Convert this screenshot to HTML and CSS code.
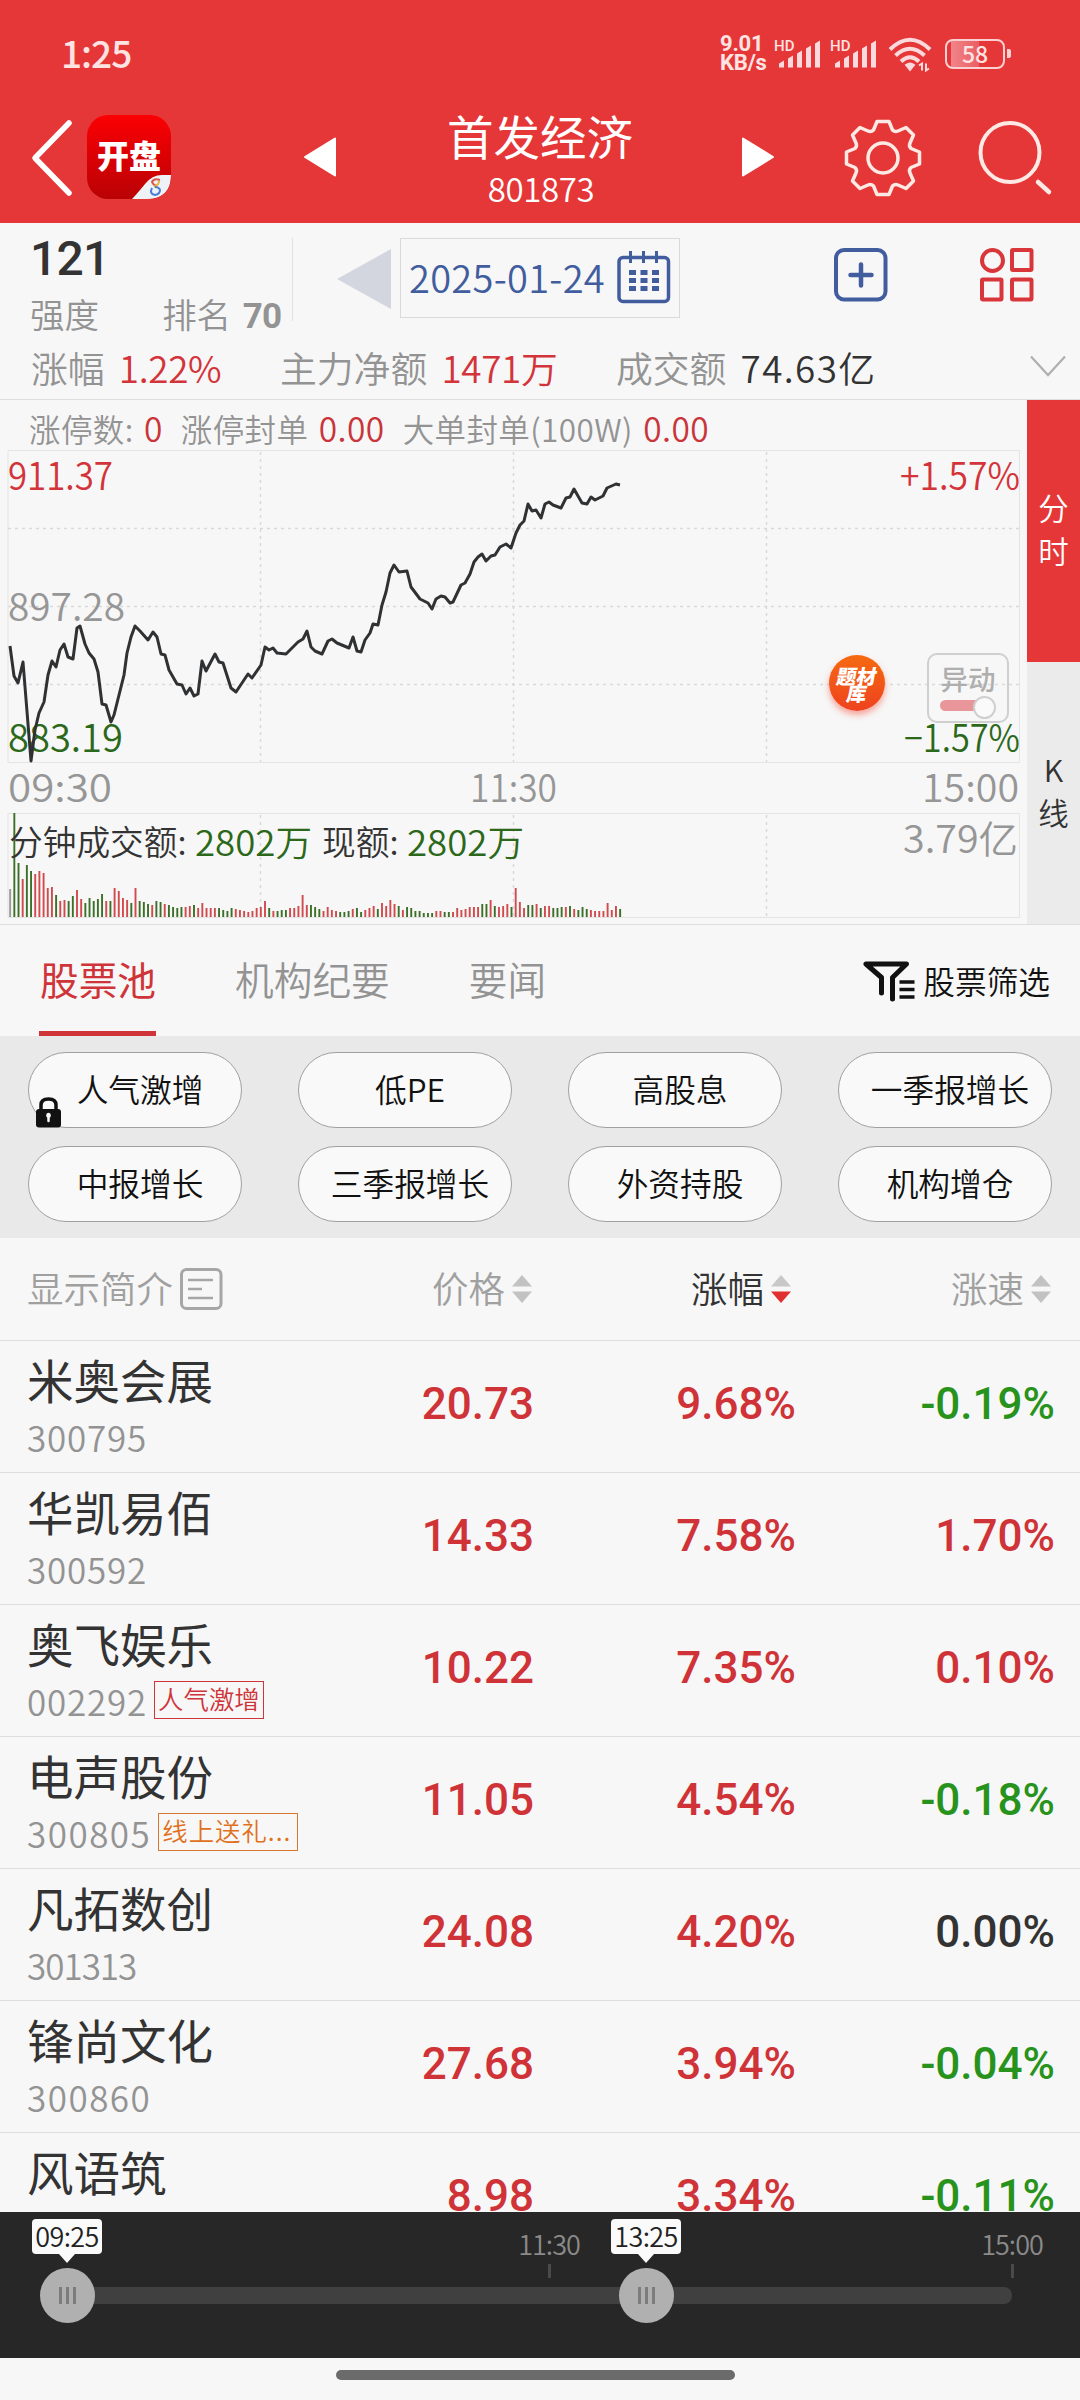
FILE: index.html
```html
<!DOCTYPE html>
<html lang="zh-CN">
<head>
    <meta charset="UTF-8">
    <meta name="viewport" content="width=device-width, initial-scale=1.0">
    <title>首发经济 801873</title>
    <link rel="stylesheet" href="styles.css">
</head>
<body>
    <header class="top">
        <div class="status">
            <span class="clock">1:25</span>
            <span class="speed">9.01<br>KB/s</span>
            <svg class="signal" width="50" height="34" viewBox="0 0 50 34">
                <text class="hd" x="0" y="13">HD</text>
                <path d="M5 29.5v-4l5-3v7zM14 29.5v-9l5-3v12zM23 29.5v-14l5-3v17zM32 29.5v-19l5-3v22zM41 29.5v-24l5-3v27z" fill="#fbd9dc"/>
            </svg>
            <svg class="signal" width="50" height="34" viewBox="0 0 50 34">
                <text class="hd" x="0" y="13">HD</text>
                <path d="M5 29.5v-4l5-3v7zM14 29.5v-9l5-3v12zM23 29.5v-14l5-3v17zM32 29.5v-19l5-3v22zM41 29.5v-24l5-3v27z" fill="#fbd9dc"/>
            </svg>
            <svg class="wifi" width="44" height="36" viewBox="0 0 44 36">
                <g fill="none" stroke="#fbd9dc" stroke-width="4">
                    <path d="M2 13.500Q22 -6 42 13.500"/>
                    <path d="M7.500 19.500Q22 6 36.500 19.500"/>
                    <path d="M13 25.500Q22 17 31 25.500"/>
                </g>
                <path d="M18 29q4-3 8 0l-4 5z" fill="#fbd9dc" stroke="#fbd9dc" stroke-width="2"/>
                <path d="M31 29.500l3-2v7m4-7v7l3-2" stroke="#fbd9dc" stroke-width="2" fill="none"/>
            </svg>
            <div class="battery"><span>58</span></div>
        </div>
        <div class="nav">
            <svg class="back" width="44" height="78" viewBox="0 0 44 78">
                <path d="M39 4L5 39L39 74" fill="none" stroke="#fff" stroke-width="5.500" stroke-linecap="round" stroke-linejoin="round"/>
            </svg>
            <div class="app-icon">
                <span>开盘</span>
                <svg class="fold" width="39" height="24" viewBox="0 0 39 24">
                    <path d="M0 24Q4 20 13 9Q20 0 30 0H39Q39 24 15 24z" fill="#eef1f5"/>
                    <path d="M28 5q-6-2-8 2q1 3 5 4" fill="none" stroke="#d95a4a" stroke-width="2"/>
                    <path d="M27 6q0 4-5 6" fill="none" stroke="#e8b23c" stroke-width="2"/>
                    <path d="M20 13q-3 6 3 7q5-1 5-5q-1-3-5-3" fill="none" stroke="#4a7fd8" stroke-width="2"/>
                </svg>
            </div>
            <svg class="prev" width="34" height="42" viewBox="0 0 34 42"><path d="M2 21L32 2.500V39.500z" fill="#fff" stroke="#fff" stroke-width="2" stroke-linejoin="round"/></svg>
            <div class="title">
                <div class="title-name">首发经济</div>
                <div class="title-code">801873</div>
            </div>
            <svg class="next" width="34" height="42" viewBox="0 0 34 42"><path d="M32 21L2 2.500V39.500z" fill="#fff" stroke="#fff" stroke-width="2" stroke-linejoin="round"/></svg>
            <svg class="gear" width="80" height="80" viewBox="-40 -40 80 80">
                <g fill="none" stroke="#ffe9e4" stroke-width="3.500" stroke-linejoin="round">
                    <path d="M-6 -36.500H6L9.500 -28Q12 -25.500 15 -27L23 -30.500L30.500 -23L27 -15Q25.500 -12 28 -9.500L36.500 -6V6L28 9.500Q25.500 12 27 15L30.500 23L23 30.500L15 27Q12 25.500 9.500 28L6 36.500H-6L-9.500 28Q-12 25.500 -15 27L-23 30.500L-30.500 23L-27 15Q-25.500 12 -28 9.500L-36.500 6V-6L-28 -9.500Q-25.500 -12 -27 -15L-30.500 -23L-23 -30.500L-15 -27Q-12 -25.500 -9.500 -28z"/>
                    <circle r="15"/>
                </g>
            </svg>
            <svg class="search" width="76" height="80" viewBox="0 0 76 80">
                <circle cx="33" cy="33.500" r="29.500" fill="none" stroke="#ffe9e4" stroke-width="4"/>
                <path d="M61 63L72 73" stroke="#ffe9e4" stroke-width="4.500" stroke-linecap="round"/>
            </svg>
        </div>
    </header>

    <section class="summary">
        <div class="summary-top">
            <div class="strength">
                <div class="strength-num">121</div>
                <div class="strength-row"><span>强度</span><span>排名 <b>70</b></span></div>
            </div>
            <svg class="day-prev" width="54" height="60" viewBox="0 0 54 60"><path d="M0 30L54 0V60z" fill="#d3d5df"/></svg>
            <div class="date-box">
                <span>2025-01-24</span>
                <svg width="54" height="54" viewBox="0 0 54 54">
                    <rect x="2" y="7.500" width="49.500" height="44" rx="4" fill="none" stroke="#415d9e" stroke-width="3.500"/>
                    <path d="M13.500 1v12M26.500 1v12M39.500 1v12" stroke="#415d9e" stroke-width="3"/>
                    <path d="M12 22.500h30M12 30.500h30M12 38.500h30" stroke="#415d9e" stroke-width="5" stroke-dasharray="7 4.500"/>
                </svg>
            </div>
            <svg class="add" width="54" height="54" viewBox="0 0 54 54">
                <rect x="2" y="2" width="49.500" height="49.500" rx="8" fill="none" stroke="#415d9e" stroke-width="4"/>
                <path d="M27 16.500v21M16.500 27h21" stroke="#415d9e" stroke-width="4.500" stroke-linecap="round"/>
            </svg>
            <svg class="modules" width="54" height="54" viewBox="0 0 54 54">
                <g fill="none" stroke="#d9363b" stroke-width="4">
                    <circle cx="12.500" cy="12.500" r="10.500"/>
                    <rect x="32" y="2" width="19.500" height="20" rx="1"/>
                    <rect x="2" y="31.500" width="19.500" height="20" rx="1"/>
                    <rect x="32" y="31.500" width="19.500" height="20" rx="1"/>
                </g>
            </svg>
        </div>
        <div class="summary-row">
            <span class="kv kv-rise">涨幅 <em class="red">1.22%</em></span>
            <span class="kv kv-main">主力净额 <em class="red">1471万</em></span>
            <span class="kv kv-amount">成交额 <em>74.63亿</em></span>
            <svg width="36" height="24" viewBox="0 0 36 24"><path d="M1 1.500L18 20L35 1.500" fill="none" stroke="#b0b0b0" stroke-width="2.200"/></svg>
        </div>
    </section>

    <section class="chart-section">
        <div class="chart-main">
            <div class="limits">
                <span>涨停数: <em>0</em></span>
                <span>涨停封单 <em>0.00</em></span>
                <span>大单封单(100W) <em>0.00</em></span>
            </div>
            <svg class="chart" width="1027" height="475" viewBox="0 450 1027 475">
                <g class="grid">
                    <path d="M8 450.500H1019.500V762.500H8zM8 813.500H1019.500V917.500H8z"/>
                    <path class="dash" d="M8 528.500H1019M8 606.500H1019M8 684.500H1019M260.500 452V762M513.500 452V762M766.500 452V762M260.500 815V917M513.500 815V917M766.500 815V917"/>
                </g>
                <text class="axis red" x="8" y="490" textLength="105" lengthAdjust="spacingAndGlyphs">911.37</text>
                <text class="axis grey" x="8" y="621" textLength="117" lengthAdjust="spacingAndGlyphs">897.28</text>
                <text class="axis red" x="900" y="490" textLength="120" lengthAdjust="spacingAndGlyphs">+1.57%</text>
                <g id="volume"></g>
                <text class="axis green" x="8" y="752" textLength="115" lengthAdjust="spacingAndGlyphs">883.19</text>
                <text class="axis green" x="904" y="752" textLength="116" lengthAdjust="spacingAndGlyphs">−1.57%</text>
                <text class="axis grey" x="8" y="802" textLength="104" lengthAdjust="spacingAndGlyphs">09:30</text>
                <text class="axis grey" x="470" y="802" textLength="87" lengthAdjust="spacingAndGlyphs">11:30</text>
                <text class="axis grey" x="922" y="802" textLength="97" lengthAdjust="spacingAndGlyphs">15:00</text>
                <text class="axis grey" x="903" y="853" textLength="115" lengthAdjust="spacingAndGlyphs">3.79亿</text>
                <text class="minute" x="9" y="855">分钟成交额:</text>
                <text class="minute green" x="195" y="856" textLength="117" lengthAdjust="spacingAndGlyphs">2802万</text>
                <text class="minute" x="322" y="855">现额:</text>
                <text class="minute green" x="407" y="856" textLength="117" lengthAdjust="spacingAndGlyphs">2802万</text>
                <polyline class="price-line" points="10,646 14,676 18,683 23,662 31,761 35,730 39,713 44,702 48,675 52,661 56,667 60,650 64,644 68,657 73,659 77,628 80,626 85,644 89,653 94,659 98,672 102,704 106,705 111,722 114,715 119,695 124,675 127,653 131,637 135,626 140,631 148,640 153,632 157,637 161,654 165,655 169,670 177,684 182,685 186,694 190,688 194,696 198,694 202,661 206,671 215,654 219,662 223,663 231,688 236,692 248,674 252,678 261,665 265,647 269,650 273,648 277,653 286,654 298,642 303,639 307,631 311,647 315,651 322,654 328,641 332,639 337,643 349,648 353,637 357,651 361,652 365,640 370,633 373,624 378,625 382,605 386,592 390,573 394,565 399,572 407,571 411,587 420,599 428,603 432,609 436,599 441,596 445,597 450,603 453,602 461,585 465,583 470,574 474,562 478,557 482,554 486,561 491,556 495,555 500,547 506,544 511,548 516,533 520,525 524,521 528,504 532,511 536,510 541,518 545,504 549,502 553,505 561,508 566,498 570,497 574,489 582,503 587,504 591,497 595,500 603,496 607,488 616,484 620,485"/>
            </svg>
            <div class="topic-badge"><span>题材</span><span>库</span></div>
            <div class="alert-toggle"><span>异动</span><i></i></div>
        </div>
        <div class="side-tabs">
            <div class="side-tab active">分<br>时</div>
            <div class="side-tab">K<br>线</div>
        </div>
    </section>

    <nav class="tabs">
        <span class="tab active">股票池</span>
        <span class="tab">机构纪要</span>
        <span class="tab">要闻</span>
        <span class="filter">
            <svg width="53" height="42" viewBox="0 0 53 42">
                <path d="M18.500 33V17.500L3 4H43.500L29.500 17.500V39" fill="none" stroke="#111" stroke-width="5" stroke-linecap="round" stroke-linejoin="round"/>
                <path d="M36.500 22h15M36.500 29.500h15M36.500 37h15" stroke="#111" stroke-width="3.500"/>
            </svg>
            <span>股票筛选</span>
        </span>
    </nav>

    <section class="pills">
        <div class="pill">人气激增
            <svg class="lock" width="25" height="31" viewBox="0 0 25 31">
                <path d="M5 14V8Q5 2 12.500 2Q20 2 20 8V14" fill="none" stroke="#111" stroke-width="3.500"/>
                <rect x="0" y="12" width="25" height="18.500" rx="3" fill="#111"/>
                <path d="M12.500 17v7" stroke="#f7f7f7" stroke-width="2.500" stroke-linecap="round"/><circle cx="12.500" cy="18.500" r="2.400" fill="#f7f7f7"/>
            </svg>
        </div>
        <div class="pill">低PE</div>
        <div class="pill">高股息</div>
        <div class="pill">一季报增长</div>
        <div class="pill">中报增长</div>
        <div class="pill">三季报增长</div>
        <div class="pill">外资持股</div>
        <div class="pill">机构增仓</div>
    </section>

    <section class="stocks">
        <div class="stock-head">
            <span class="intro"><span>显示简介</span>
                <svg width="43" height="42" viewBox="0 0 43 42">
                    <rect x="1.500" y="1.500" width="39.500" height="39" rx="5" fill="none" stroke="#a6a6a6" stroke-width="3"/>
                    <path d="M8 12h25M8 21h14M8 30h25" stroke="#a6a6a6" stroke-width="2.500"/>
                </svg>
            </span>
            <span class="sort"><span>价格</span><svg width="20" height="30" viewBox="0 0 20 30"><path d="M0 12.500L10 1L20 12.500z" fill="#c2c2c2"/><path d="M0 17.500L10 29L20 17.500z" fill="#c2c2c2"/></svg></span>
            <span class="sort current"><span>涨幅</span><svg width="20" height="30" viewBox="0 0 20 30"><path d="M0 12.500L10 1L20 12.500z" fill="#c8c8c8"/><path d="M0 17.500L10 29L20 17.500z" fill="#e03030"/></svg></span>
            <span class="sort"><span>涨速</span><svg width="20" height="30" viewBox="0 0 20 30"><path d="M0 12.500L10 1L20 12.500z" fill="#c2c2c2"/><path d="M0 17.500L10 29L20 17.500z" fill="#c2c2c2"/></svg></span>
        </div>
        <div class="stock">
            <div class="who"><div class="name">米奥会展</div><div class="code">300795</div></div>
            <b>20.73</b><b>9.68%</b><b class="down">-0.19%</b>
        </div>
        <div class="stock">
            <div class="who"><div class="name">华凯易佰</div><div class="code">300592</div></div>
            <b>14.33</b><b>7.58%</b><b>1.70%</b>
        </div>
        <div class="stock">
            <div class="who"><div class="name">奥飞娱乐</div><div class="code">002292<span class="tag">人气激增</span></div></div>
            <b>10.22</b><b>7.35%</b><b>0.10%</b>
        </div>
        <div class="stock">
            <div class="who"><div class="name">电声股份</div><div class="code wide">300805<span class="tag orange">线上送礼...</span></div></div>
            <b>11.05</b><b>4.54%</b><b class="down">-0.18%</b>
        </div>
        <div class="stock">
            <div class="who"><div class="name">凡拓数创</div><div class="code narrow">301313</div></div>
            <b>24.08</b><b>4.20%</b><b class="flat">0.00%</b>
        </div>
        <div class="stock">
            <div class="who"><div class="name">锋尚文化</div><div class="code wide">300860</div></div>
            <b>27.68</b><b>3.94%</b><b class="down">-0.04%</b>
        </div>
        <div class="stock">
            <div class="who"><div class="name">风语筑</div></div>
            <b>8.98</b><b>3.34%</b><b class="down">-0.11%</b>
        </div>
    </section>

    <footer class="timeline">
        <div class="track">
            <div class="mark mark-noon">11:30</div>
            <div class="mark mark-close">15:00</div>
            <div class="thumb thumb-start"><span class="tip">09:25</span><i></i><i></i><i></i></div>
            <div class="thumb thumb-end"><span class="tip">13:25</span><i></i><i></i><i></i></div>
        </div>
    </footer>
    <div class="home"><div class="home-bar"></div></div>

    <script>
        // 每分钟成交额: 颜色 + 柱高
        const bars = 'n28 g104 g54 r38 g52 g46 r43 r46 r44 r29 r30 g22 r16 r17 g16 g21 r27 r18 g14 g19 g16 g18 g23 r16 g16 r29 r26 r19 r17 g14 r29 g16 g15 g13 r12 g16 g15 r13 g12 g10 g9 g10 r10 r11 g12 r9 r14 r9 r9 r9 g9 g7 g6 g9 r8 r7 r6 r5 r6 r9 r10 r16 g9 r6 g6 g7 g7 r9 r9 r11 r22 r12 g12 g10 g8 r6 r10 r7 r6 g5 g5 g6 r8 g9 g5 r7 r9 r11 g8 r14 r11 r17 r13 g11 r7 g10 g9 g6 g6 g4 g4 g4 r6 r6 g5 g5 r5 r9 r7 r8 r10 r10 r10 g13 g13 r17 g11 r10 r11 r13 g10 r29 r15 r9 g12 g12 r13 g9 r11 r11 g9 g9 g10 r10 g11 r8 g7 g10 g8 r7 r6 r6 r6 r14 r7 r11 g8'.split(' ');
        const colors = { n: '#9a9a9a', g: '#3c7028', r: '#d04a4e' };
        const volume = document.getElementById('volume');

        bars.forEach((bar, i) => {
            const height = parseInt(bar.slice(1));
            const rect = document.createElementNS('http://www.w3.org/2000/svg', 'rect');
            rect.setAttribute('x', 9.2 + i * 4.178);
            rect.setAttribute('y', 917 - height);
            rect.setAttribute('width', 1.9);
            rect.setAttribute('height', height);
            rect.setAttribute('fill', colors[bar[0]]);
            volume.appendChild(rect);
        });
    </script>
</body>
</html>
```
FILE: styles.css
```css
* {
    box-sizing: border-box;
}
body {
    margin: 0;
    width: 1080px;
    height: 2400px;
    overflow: hidden;
    background-color: #f7f7f7;
    color: #333;
    font-family: 'Noto Sans CJK SC', 'Noto Sans', sans-serif;
    font-weight: 350;
    display: flex;
    flex-direction: column;
    white-space: nowrap;
}
svg {
    display: block;
    flex: none;
}
em {
    font-style: normal;
}
.red {
    color: #d3343a;
    fill: #d3343a;
}
.green {
    fill: #2c6819;
}
.grey {
    fill: #969696;
}

/* 顶部 */
.top {
    height: 223px;
    flex: none;
    background-color: #e53737;
    color: #fff;
}
.status {
    display: flex;
    height: 108px;
    color: #ffe3e3;
}
.clock {
    width: 658px;
    padding-left: 61px;
    margin-right: 62px;
    font-size: 37px;
    line-height: 105px;
    font-weight: 500;
    letter-spacing: -1px;
}
.speed {
    width: 54px;
    padding-top: 34px;
    font-family: Roboto, sans-serif;
    font-weight: 700;
    font-size: 22px;
    line-height: 19px;
    letter-spacing: -0.2px;
}
.signal {
    margin-top: 38px;
    margin-right: 6px;
}
.hd {
    font-family: Roboto, sans-serif;
    font-size: 15px;
    font-weight: 500;
    fill: #ffe3e3;
}
.wifi {
    margin-top: 36px;
    margin-left: 2px;
}
.battery {
    position: relative;
    width: 60px;
    height: 30px;
    margin: 39px 0 0 13px;
    border: 2.5px solid #fbd0d2;
    border-radius: 8px;
    background: linear-gradient(90deg, transparent 4px, #f0858a 4px, #ea5e62 32px, transparent 32px);
    text-align: center;
    font-size: 23px;
    line-height: 24px;
    font-weight: 500;
}
.battery::after {
    content: '';
    position: absolute;
    right: -8px;
    top: 8px;
    width: 4px;
    height: 9px;
    border-radius: 0 2px 2px 0;
    background-color: #fbd0d2;
}
.nav {
    display: flex;
    height: 115px;
}
.back {
    margin: 11px 0 0 30px;
}
.app-icon {
    position: relative;
    width: 84px;
    height: 84px;
    margin: 7px 0 0 13px;
    border-radius: 21px;
    overflow: hidden;
    background: linear-gradient(#fb0003, #b90205);
    text-align: center;
    font-size: 32px;
    line-height: 79px;
    font-weight: 900;
}
.fold {
    position: absolute;
    right: 0;
    bottom: 0;
}
.prev {
    margin: 28px 0 0 132px;
}
.title {
    width: 404px;
    padding-left: 2px;
    text-align: center;
}
.title-name {
    font-size: 46.5px;
    line-height: 53px;
    font-weight: 400;
}
.title-code {
    font-size: 33px;
    line-height: 34px;
    margin-top: 10px;
    letter-spacing: -0.4px;
    padding-left: 2px;
}
.next {
    margin-top: 28px;
}
.gear {
    margin: 10px 0 0 68px;
}
.search {
    margin: 11px 0 0 54px;
}

/* 板块概况 */
.summary {
    height: 177px;
    flex: none;
    border-bottom: 1px solid #dedede;
}
.summary-top {
    display: flex;
    height: 116px;
}
.strength {
    width: 293px;
    height: 98px;
    padding-left: 30px;
    position: relative;
}
.strength::after {
    content: '';
    position: absolute;
    right: 0;
    top: 15px;
    height: 83px;
    border-right: 1px solid #e2e2e2;
}
.strength-num {
    font-family: Roboto, sans-serif;
    font-size: 48px;
    font-weight: 500;
    line-height: 56px;
    margin-top: 8px;
    letter-spacing: -0.8px;
}
.strength-row {
    display: flex;
    justify-content: space-between;
    padding-right: 12px;
    font-size: 34.5px;
    line-height: 40px;
    margin-top: 6px;
    color: #939393;
}
.strength-row b {
    font-family: Roboto, sans-serif;
    font-size: 35px;
    font-weight: 700;
    letter-spacing: -1px;
    margin-left: 4px;
}
.day-prev {
    margin: 26px 0 0 44px;
}
.date-box {
    display: flex;
    align-items: center;
    width: 280px;
    height: 80px;
    margin: 15px 0 0 9px;
    padding: 0 0 0 8px;
    border: 1px solid #d9d9de;
    color: #415d9e;
    font-size: 38px;
    line-height: 78px;
    letter-spacing: 0.3px;
}
.date-box span {
    margin-top: -3px;
}
.date-box svg {
    margin: -2px 0 0 12px;
}
.add {
    margin: 25px 0 0 154px;
}
.modules {
    margin: 25px 0 0 92px;
}
.summary-row {
    display: flex;
    align-items: center;
    height: 56px;
    padding-left: 31px;
    font-size: 36.8px;
    color: #939393;
}
.kv em {
    margin-left: 6px;
    letter-spacing: -0.3px;
}
.kv em:not(.red) {
    color: #333;
    letter-spacing: 1.4px;
}
.kv-rise {
    width: 249px;
}
.kv-main {
    width: 336px;
}
.kv-amount {
    width: 414px;
}

/* 分时图 */
.chart-section {
    display: flex;
    height: 525px;
    flex: none;
    border-bottom: 1px solid #dedede;
}
.chart-main {
    position: relative;
    width: 1027px;
}
.limits {
    display: flex;
    gap: 18px;
    height: 50px;
    padding-left: 29px;
    font-size: 31.5px;
    line-height: 56px;
    letter-spacing: 0.4px;
    color: #939393;
}
.limits em {
    margin-left: 3px;
    color: #c9353a;
    font-size: 33.5px;
}
.grid path {
    fill: none;
    stroke: #e4e4e4;
}
.grid .dash {
    stroke: #d9d9d9;
    stroke-width: 1.5;
    stroke-dasharray: 3 4;
}
.axis {
    font-size: 38px;
}
.minute {
    font-size: 33.7px;
    fill: #333;
}
.minute.green {
    fill: #2c6819;
    font-size: 35px;
}
.price-line {
    fill: none;
    stroke: #303133;
    stroke-width: 3;
    stroke-linejoin: round;
}
.topic-badge {
    position: absolute;
    left: 829px;
    top: 255px;
    width: 56px;
    height: 56px;
    padding-top: 12px;
    border-radius: 50%;
    background: linear-gradient(#f56a10, #ee421f);
    box-shadow: 0 4px 6px rgba(250, 80, 60, 0.5);
    color: #fff;
    font-size: 20px;
    line-height: 17px;
    font-weight: 900;
    text-align: center;
}
.topic-badge span {
    display: block;
    transform: skewX(-10deg);
}
.alert-toggle {
    position: absolute;
    left: 927px;
    top: 253px;
    width: 82px;
    height: 70px;
    border: 2px solid #cfcfcf;
    border-radius: 10px;
    text-align: center;
    color: #aeaeae;
    font-size: 27.5px;
    line-height: 46px;
    font-weight: 500;
}
.alert-toggle span {
    display: block;
}
.alert-toggle i {
    position: relative;
    display: block;
    width: 50px;
    height: 11px;
    margin: -1px 0 0 11px;
    border-radius: 6px;
    background-color: #e8969a;
}
.alert-toggle i::after {
    content: '';
    position: absolute;
    right: -6px;
    top: -4px;
    width: 19px;
    height: 19px;
    border: 2px solid #cfcfcf;
    border-radius: 50%;
    background-color: #fafafa;
}
.side-tabs {
    width: 53px;
}
.side-tab {
    height: 262px;
    padding-top: 86px;
    background-color: #ebebeb;
    text-align: center;
    font-size: 30.5px;
    line-height: 42.5px;
}
.side-tab.active {
    background-color: #e53737;
    color: #fff;
}

/* 标签页 */
.tabs {
    display: flex;
    height: 111px;
    flex: none;
    padding-left: 39px;
    font-size: 38.7px;
    line-height: 107px;
    color: #939393;
}
.tab {
    margin-right: 78px;
    padding-left: 1px;
}
.tab.active {
    color: #cf3439;
    border-bottom: 5px solid #cf3439;
    font-weight: 400;
}
.filter {
    display: flex;
    align-items: center;
    margin-left: auto;
    padding-right: 30px;
    gap: 7px;
    color: #111;
    font-size: 31.7px;
}

/* 筛选按钮 */
.pills {
    display: grid;
    grid-template-columns: repeat(4, 214px);
    gap: 17px 56px;
    height: 202px;
    flex: none;
    padding: 16px 28px;
    background-color: #e9e9e9;
}
.pill {
    position: relative;
    height: 76px;
    padding-left: 10px;
    border: 1.5px solid #a0a0a0;
    border-radius: 38px;
    background-color: #f9f9f9;
    color: #111;
    text-align: center;
    font-size: 31.7px;
    line-height: 70px;
}
.lock {
    position: absolute;
    left: 7px;
    bottom: -1px;
}

/* 股票列表 */
.stocks {
    height: 974px;
    flex: none;
    overflow: hidden;
}
.stock-head {
    display: grid;
    grid-template-columns: 245px 260px 259px 260px;
    align-items: center;
    height: 103px;
    padding-left: 27px;
    border-bottom: 1px solid #dedede;
    font-size: 36.5px;
    color: #a0a0a0;
}
.intro,
.sort {
    display: flex;
    align-items: center;
    gap: 7px;
}
.sort {
    justify-content: flex-end;
}
.intro span,
.sort span {
    margin-top: -3px;
}
.sort.current {
    color: #333;
}
.stock {
    display: grid;
    grid-template-columns: 300px 207px 262px 259px;
    height: 132px;
    padding-left: 27px;
    border-bottom: 1px solid #dedede;
}
.stock b {
    padding-top: 36px;
    font-family: Roboto, sans-serif;
    font-size: 44px;
    line-height: 54px;
    font-weight: 500;
    text-align: right;
    color: #cf3338;
}
.stock .down {
    color: #27931c;
}
.stock .flat {
    color: #333;
}
.name {
    margin-top: 10px;
    font-size: 46.5px;
    line-height: 56px;
    font-weight: 400;
}
.code {
    display: flex;
    align-items: center;
    height: 40px;
    margin-top: 10px;
    font-size: 35px;
    line-height: 40px;
    letter-spacing: 0.8px;
    color: #939393;
}
.code.wide {
    letter-spacing: 1.5px;
}
.code.narrow {
    letter-spacing: -1px;
}
.tag {
    height: 38px;
    margin: 0 0 2px 7px;
    padding: 0 3px;
    border: 1.5px solid #cf3439;
    color: #cf3439;
    font-size: 25.4px;
    line-height: 32px;
    letter-spacing: 0;
}
.tag.orange {
    padding-right: 6px;
    border-color: #d9772f;
    color: #e0701c;
    letter-spacing: 1px;
}

/* 时间轴 */
.timeline {
    height: 146px;
    flex: none;
    padding: 75px 68px 0;
    background-color: #272727;
}
.track {
    position: relative;
    height: 17px;
    border-radius: 8px;
    background-color: #404040;
}
.mark {
    position: absolute;
    top: -58px;
    width: 80px;
    height: 49px;
    text-align: center;
    font-size: 27px;
    line-height: 29px;
    letter-spacing: -1px;
    color: #8a8a8a;
}
.mark::after {
    content: '';
    position: absolute;
    left: 39px;
    bottom: 0;
    width: 3px;
    height: 14px;
    background-color: #4a4a4a;
}
.mark-noon {
    left: 441px;
}
.mark-close {
    left: 904px;
}
.thumb {
    position: absolute;
    top: -19px;
    width: 55px;
    height: 55px;
    border-radius: 50%;
    background-color: #b0b0b0;
    display: flex;
    align-items: center;
    justify-content: center;
    gap: 4px;
}
.thumb-start {
    left: -28px;
}
.thumb-end {
    left: 551px;
}
.thumb i {
    width: 3px;
    height: 17px;
    background-color: #7c7c7c;
}
.tip {
    position: absolute;
    left: -8px;
    top: -49px;
    width: 70px;
    height: 35px;
    border-radius: 4px;
    background-color: #fafafa;
    color: #222;
    text-align: center;
    font-size: 27px;
    line-height: 34px;
    letter-spacing: -0.6px;
}
.tip::after {
    content: '';
    position: absolute;
    left: 27px;
    top: 35px;
    border: 8px solid transparent;
    border-top: 9px solid #fafafa;
    border-bottom: none;
}
.home {
    height: 42px;
    flex: none;
    padding-top: 12px;
}
.home-bar {
    width: 399px;
    height: 10px;
    margin-left: 336px;
    border-radius: 5px;
    background-color: #6b6b6b;
}
```
